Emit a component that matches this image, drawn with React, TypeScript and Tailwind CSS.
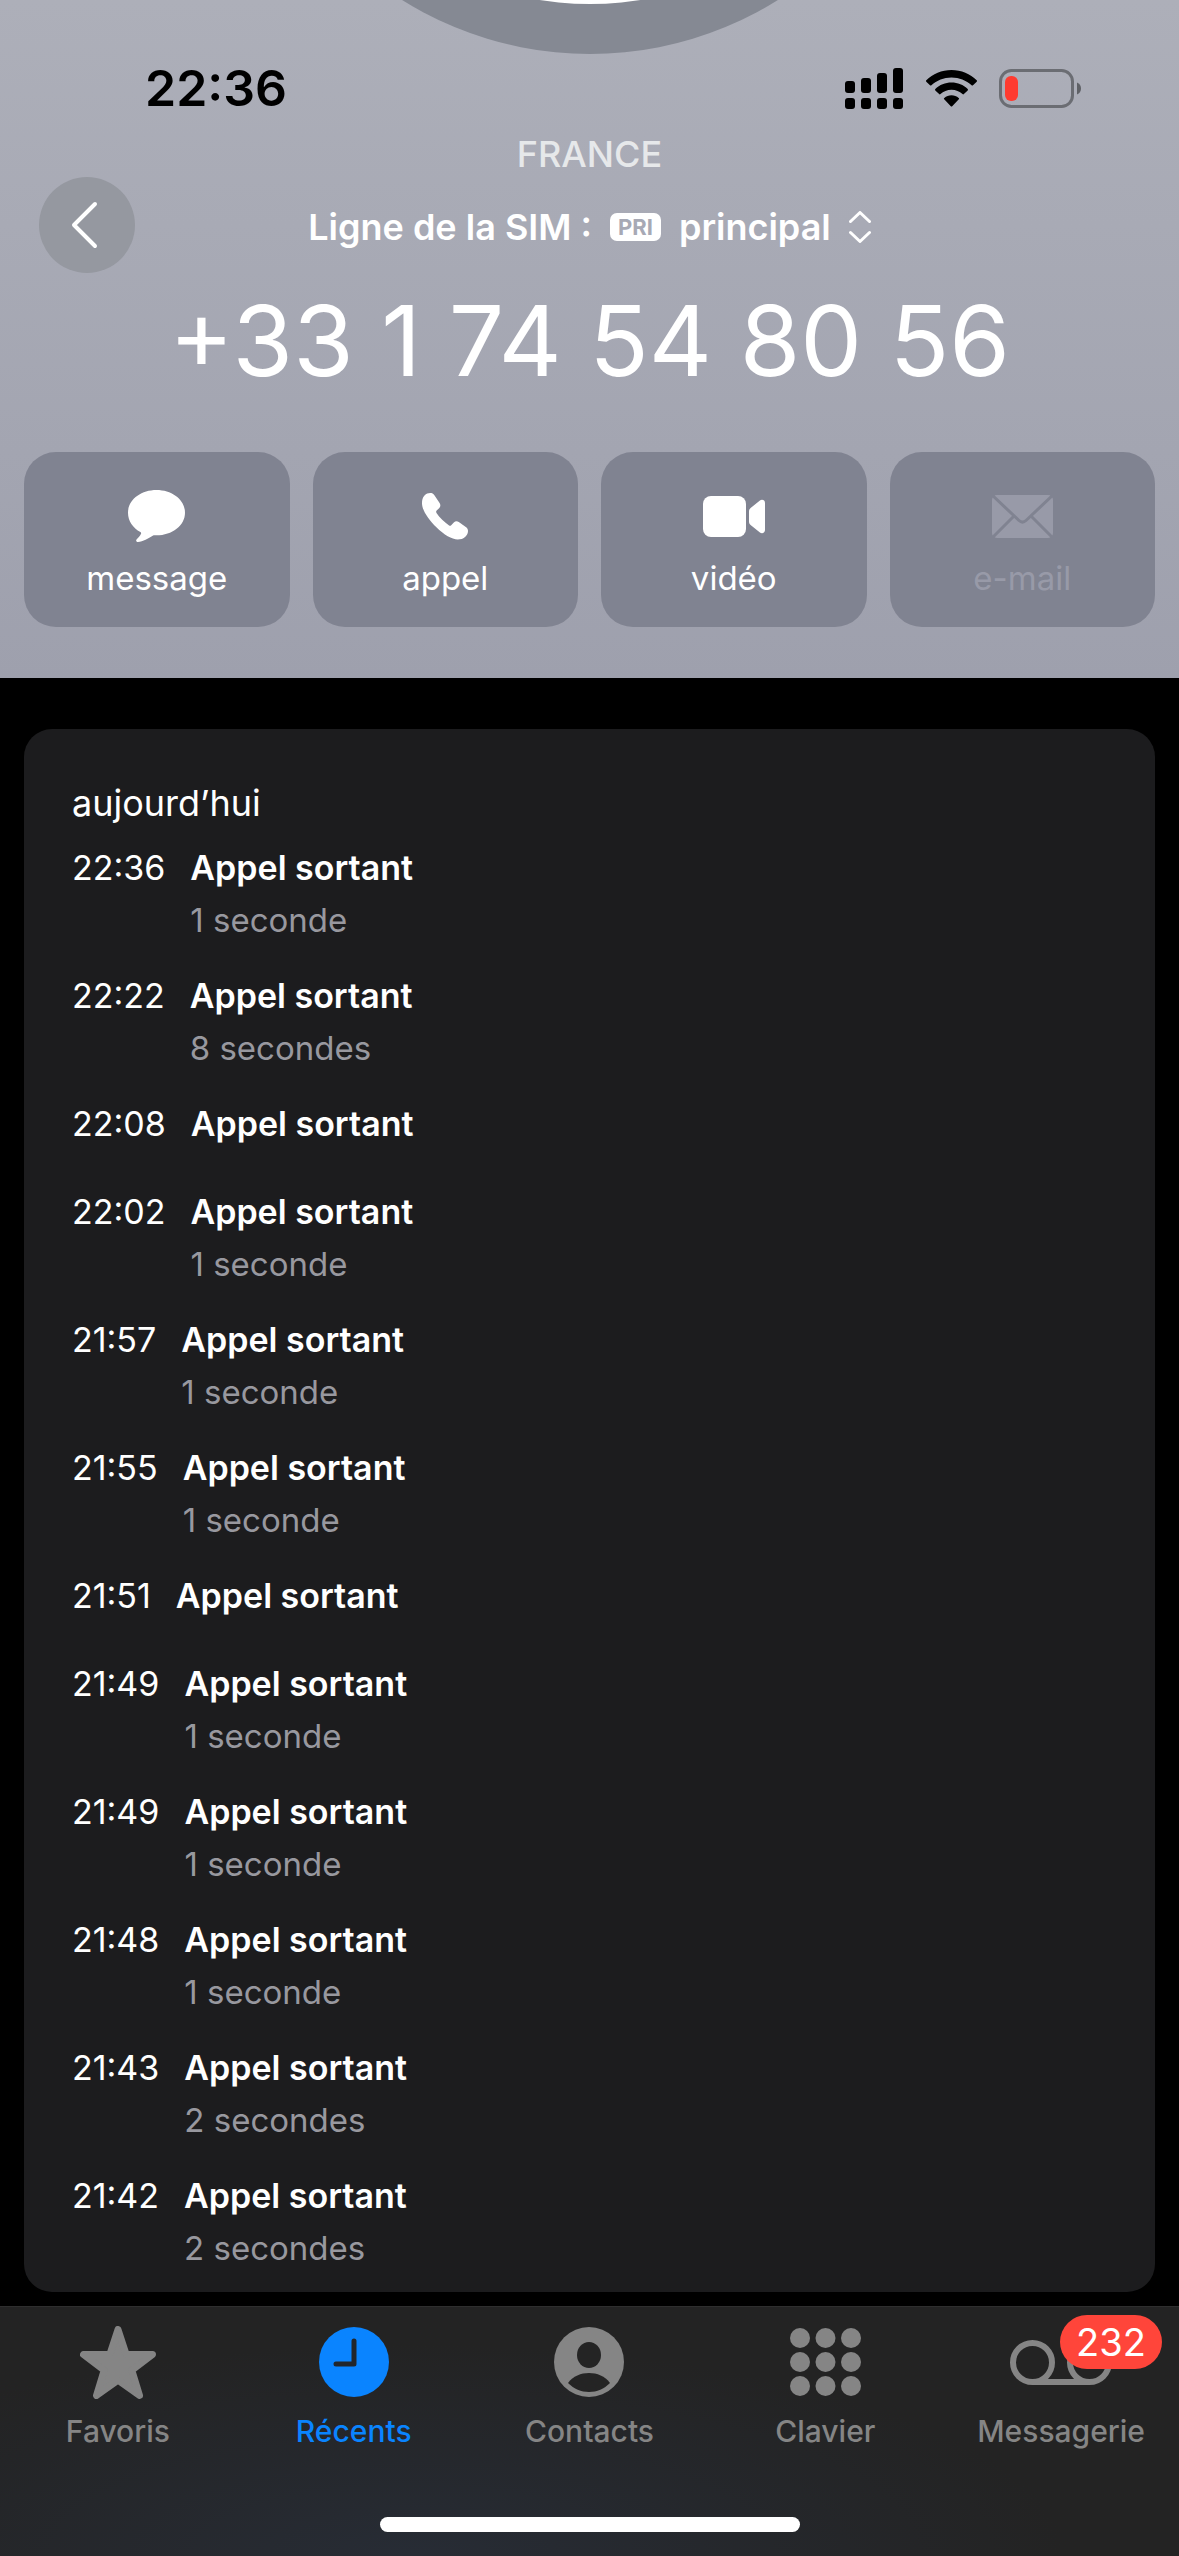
import React, { useState } from 'react';
import clsx from 'clsx';

interface CallEntry {
  time: string;
  label: string;
  duration?: string;
}

interface ActionProps {
  label: string;
  disabled?: boolean;
  children: React.ReactNode;
}

interface Tab {
  id: string;
  label: string;
  icon: React.ReactNode;
  badge?: number;
}

const calls: CallEntry[] = [
  { time: '22:36', label: 'Appel sortant', duration: '1 seconde' },
  { time: '22:22', label: 'Appel sortant', duration: '8 secondes' },
  { time: '22:08', label: 'Appel sortant' },
  { time: '22:02', label: 'Appel sortant', duration: '1 seconde' },
  { time: '21:57', label: 'Appel sortant', duration: '1 seconde' },
  { time: '21:55', label: 'Appel sortant', duration: '1 seconde' },
  { time: '21:51', label: 'Appel sortant' },
  { time: '21:49', label: 'Appel sortant', duration: '1 seconde' },
  { time: '21:49', label: 'Appel sortant', duration: '1 seconde' },
  { time: '21:48', label: 'Appel sortant', duration: '1 seconde' },
  { time: '21:43', label: 'Appel sortant', duration: '2 secondes' },
  { time: '21:42', label: 'Appel sortant', duration: '2 secondes' },
];

// ============================================================================
// ICONS
// ============================================================================

const SignalIcon = () => (
  <svg width="59" height="41" viewBox="0 0 59 41" fill="black" aria-hidden="true">
    <rect x="0" y="13" width="10" height="12" rx="3" />
    <rect x="16" y="10" width="10" height="15" rx="3" />
    <rect x="32" y="5" width="10" height="20" rx="3" />
    <rect x="48" y="0" width="10" height="25" rx="3" />
    <rect x="0" y="30" width="10" height="11" rx="3" />
    <rect x="16" y="30" width="10" height="11" rx="3" />
    <rect x="32" y="30" width="10" height="11" rx="3" />
    <rect x="48" y="30" width="10" height="11" rx="3" />
  </svg>
);

const WifiIcon = () => (
  <svg width="51" height="37" viewBox="0 0 51 37" fill="black" aria-hidden="true">
    <path d="M25.5 0C15.7 0 6.8 3.8.3 10.3c-.4.4-.4 1 0 1.4l3.7 3.6c.4.4 1 .4 1.4 0C10.8 10.2 17.8 7.4 25.5 7.4s14.7 2.8 20.1 7.9c.4.4 1 .4 1.4 0l3.7-3.6c.4-.4.4-1 0-1.4C44.2 3.8 35.3 0 25.5 0z" />
    <path d="M25.5 12.6c-6.2 0-11.9 2.4-16.2 6.4-.4.4-.4 1 0 1.4l3.8 3.7c.4.4 1 .4 1.4 0 2.9-2.7 6.7-4.3 11-4.3s8.1 1.6 11 4.3c.4.4 1 .4 1.4 0l3.8-3.7c.4-.4.4-1 0-1.4-4.3-4-10-6.4-16.2-6.4z" />
    <path d="M25.5 25.3c-2.700 0-5.200 1-7.200 2.600-.5.400-.5 1-.1 1.400l6.600 6.900c.4.400 1 .4 1.400 0l6.600-6.900c.4-.4.400-1-.1-1.400-2-1.600-4.500-2.600-7.200-2.600z" />
  </svg>
);

const BatteryIcon = () => (
  <svg width="82" height="39" viewBox="0 0 82 39" fill="none" aria-hidden="true">
    <rect x="1.5" y="1.5" width="72" height="36" rx="11" stroke="#6b6d73" strokeWidth="3" />
    <path d="M78 13.5c2.5 1 4 3.3 4 6s-1.5 5-4 6z" fill="#5f6166" />
    <rect x="6" y="7" width="13" height="25" rx="6" fill="#ff3b30" />
  </svg>
);

const ChevronLeftIcon = () => (
  <svg width="28" height="48" viewBox="0 0 28 48" fill="none" aria-hidden="true">
    <path
      d="M24 3L3 24l21 21"
      stroke="white"
      strokeWidth="4"
      strokeLinecap="round"
      strokeLinejoin="round"
    />
  </svg>
);

const UpDownIcon = () => (
  <svg width="22" height="32" viewBox="0 0 22 32" fill="none" aria-hidden="true">
    <path
      d="M1.5 10.5L11 1.5l9.5 9M1.5 21.500l9.500 9 9.500-9"
      stroke="white"
      strokeWidth="3"
      strokeLinecap="round"
      strokeLinejoin="round"
    />
  </svg>
);

const MessageIcon = () => (
  <svg width="57" height="52" viewBox="0 0 57 52" fill="currentColor" aria-hidden="true">
    <path d="M28.5 0C12.8 0 0 9.8 0 22.7c0 8.300 5 15.300 12.400 19.300.8.500.9 1.200.5 2-1 2-2.500 3.500-4.200 5.200-1.100 1.200-.5 2.800 1.200 2.800 5.200-.3 10.500-3.500 14.800-6.200.7-.4 1.200-.5 2-.5h1.800C44.200 45.300 57 35.500 57 22.700 57 9.800 44.200 0 28.500 0z" />
  </svg>
);

const PhoneIcon = () => (
  <svg width="46" height="47" viewBox="0 0 46 47" fill="currentColor" aria-hidden="true">
    <path d="M2.7 2.3C4.2.8 6 0 8.200 0c1.800 0 3.200.6 4.200 2.200L17.600 10c1.100 1.800 1 3.500-.3 5l-2.600 2.600c-.7.7-.7 1.500-.2 2.300 1.500 2.300 3.500 4.700 5.700 6.900s4.600 4.200 6.900 5.700c.7.500 1.500.4 2.100-.2l2.600-2.700c1.500-1.500 3.200-1.700 5-.5l7 5c1.500 1 2.200 2.300 2.200 4 0 2-.9 3.900-2.400 5.400-2.300 2.400-5 3-7.900 3-5.700 0-13.800-4.700-21.300-12.200C6.300 26.200 0 17.200 0 10.200c0-2.900.5-5.800 2.700-7.900z" />
  </svg>
);

const VideoIcon = () => (
  <svg width="62" height="41" viewBox="0 0 62 41" fill="currentColor" aria-hidden="true">
    <rect x="0" y="0" width="43" height="41" rx="8" />
    <path d="M46 15.500c0-1.500.5-2.500 1.600-3.500l9-7.300c2.300-1.900 5.400-.7 5.400 2.200v27.200c0 2.900-3.100 4.100-5.400 2.200l-9-7.300c-1.100-1-1.600-2-1.600-3.500z" />
  </svg>
);

const MailIcon = () => (
  <svg width="61" height="43" viewBox="0 0 61 43" fill="none" aria-hidden="true">
    <rect width="61" height="43" rx="5" fill="currentColor" />
    <path
      d="M0 0l27 25.500c2.200 2 4.800 2 7 0L61 0M0 43l22-22M61 43L39 21"
      stroke="#808391"
      strokeWidth="3"
    />
  </svg>
);

const StarIcon = () => (
  <svg width="76" height="73" viewBox="0 0 76 73" aria-hidden="true">
    <path
      d="M38 3.500L46.200 28.500h26.300L51.800 44.200 59.500 69.500 38 54.200 16.500 69.500l7.700-25.300L3.500 28.500h26.300z"
      fill="currentColor"
      stroke="currentColor"
      strokeWidth="7"
      strokeLinejoin="round"
    />
  </svg>
);

const ClockIcon = () => (
  <svg width="70" height="70" viewBox="0 0 70 70" fill="none" aria-hidden="true">
    <circle cx="35" cy="35" r="35" fill="currentColor" />
    <path
      d="M35 14v23H17"
      stroke="#22262b"
      strokeWidth="5"
      strokeLinecap="round"
      strokeLinejoin="round"
    />
  </svg>
);

const ContactIcon = () => (
  <svg width="70" height="70" viewBox="0 0 70 70" fill="none" aria-hidden="true">
    <circle cx="35" cy="35" r="35" fill="currentColor" />
    <ellipse cx="35" cy="28" rx="12" ry="13" fill="#242424" />
    <path d="M14 56c5-7 13-10 21-10s16 3 21 10c-6 6-13 9-21 9s-15-3-21-9z" fill="#242424" />
  </svg>
);

const KeypadIcon = () => (
  <svg width="71" height="68" viewBox="0 0 71 68" fill="currentColor" aria-hidden="true">
    {[10, 34, 58].map((y) =>
      [10, 35.5, 61].map((x) => <circle key={`${x}-${y}`} cx={x} cy={y} r="10" />)
    )}
  </svg>
);

const VoicemailIcon = () => (
  <svg
    width="102"
    height="45"
    viewBox="0 0 102 45"
    fill="none"
    stroke="currentColor"
    strokeWidth="6"
    aria-hidden="true"
  >
    <circle cx="22.5" cy="22.5" r="19.5" />
    <circle cx="79.5" cy="22.5" r="19.5" />
    <path d="M22.5 42h57" />
  </svg>
);

const tabs: Tab[] = [
  { id: 'favoris', label: 'Favoris', icon: <StarIcon /> },
  { id: 'recents', label: 'Récents', icon: <ClockIcon /> },
  { id: 'contacts', label: 'Contacts', icon: <ContactIcon /> },
  { id: 'clavier', label: 'Clavier', icon: <KeypadIcon /> },
  { id: 'messagerie', label: 'Messagerie', icon: <VoicemailIcon />, badge: 232 },
];

// ============================================================================
// SECTIONS
// ============================================================================

const StatusBar = () => (
  <div className="relative flex items-center justify-between pt-[58px] pr-[98px] pl-[145px]">
    <span className="text-[50px] leading-[60px] font-semibold text-black">22:36</span>
    <div className="flex items-center gap-[22px]">
      <SignalIcon />
      <WifiIcon />
      <BatteryIcon />
    </div>
  </div>
);

const ActionButton: React.FC<ActionProps> = ({ label, disabled = false, children }) => (
  <button
    type="button"
    disabled={disabled}
    className={clsx(
      'flex flex-col items-center gap-[14px] rounded-[32px] bg-[#808391] pt-[38px] pb-[27px]',
      disabled ? 'text-[#989aa8]' : 'text-white'
    )}
  >
    <span className="flex h-[52px] items-center">{children}</span>
    <span className="text-[33px] leading-[44px]">{label}</span>
  </button>
);

const ContactHeader = () => (
  <header className="relative overflow-hidden bg-linear-to-b from-[#adafb9] to-[#9ea0ad] pb-[51px]">
    {/* Avatar, scrolled almost out of view */}
    <div className="absolute bottom-full left-1/2 h-[708px] w-[708px] -translate-x-1/2 translate-y-[54px] rounded-full bg-[#858993]">
      <div className="absolute bottom-[50px] left-1/2 h-[640px] w-[640px] -translate-x-1/2 rounded-full bg-white" />
    </div>

    <StatusBar />

    <div className="mt-[14px] grid grid-cols-[96px_1fr_96px] items-end px-[39px]">
      <button
        type="button"
        aria-label="Retour"
        className="flex h-24 w-24 items-center justify-center rounded-full bg-[#9598a0] pr-1"
      >
        <ChevronLeftIcon />
      </button>
      <div className="flex flex-col items-center gap-[29px] pb-6">
        <p className="text-[36px] leading-[44px] font-medium text-[#e6e8ea]">FRANCE</p>
        <button
          type="button"
          className="flex items-center gap-[18px] text-[36px] leading-[44px] font-semibold whitespace-nowrap text-white"
        >
          <span>Ligne de la SIM :</span>
          <span className="rounded-[7px] bg-white px-2 text-[22px] leading-[28px] font-bold text-[#a7a9b5]">
            PRI
          </span>
          <span>principal</span>
          <UpDownIcon />
        </button>
      </div>
    </div>

    <h1 className="mt-2 text-center text-[98px] leading-[120px] whitespace-nowrap text-white">
      +33 1 74 54 80 56
    </h1>

    <div className="mt-[51px] grid grid-cols-4 gap-[23px] px-6">
      <ActionButton label="message">
        <MessageIcon />
      </ActionButton>
      <ActionButton label="appel">
        <PhoneIcon />
      </ActionButton>
      <ActionButton label="vidéo">
        <VideoIcon />
      </ActionButton>
      <ActionButton label="e-mail" disabled>
        <MailIcon />
      </ActionButton>
    </div>
  </header>
);

const CallHistory = () => (
  <section className="mx-6 mt-[51px] rounded-[28px] bg-[#1c1c1e] px-12 pt-12 pb-[18px]">
    <h2 className="text-[36px] leading-[52px]">aujourd’hui</h2>
    <ul className="mt-[13px] flex flex-col gap-6">
      {calls.map((call, index) => (
        <li key={index} className="flex min-h-16 gap-[25px] text-[34px] leading-[52px]">
          <time>{call.time}</time>
          <div>
            <p className="font-semibold">{call.label}</p>
            {call.duration && (
              <p className="text-[33px] leading-[52px] text-[#98989f]">{call.duration}</p>
            )}
          </div>
        </li>
      ))}
    </ul>
  </section>
);

const TabBar = () => {
  const [active, setActive] = useState('recents');

  return (
    <nav className="mt-[14px] border-t border-[#2e2e2e] bg-[#262626] bg-radial-[at_35%_100%] from-[#272c35] to-[#232323] to-60% pb-6">
      <div className="grid grid-cols-5">
        {tabs.map((tab) => (
          <button
            key={tab.id}
            type="button"
            onClick={() => setActive(tab.id)}
            className={clsx(
              'flex flex-col items-center gap-[10px] pt-4',
              active === tab.id ? 'text-[#0a84ff]' : 'text-[#858585]'
            )}
          >
            <span className="relative flex h-[78px] items-center">
              {tab.icon}
              {tab.badge && (
                <span className="absolute -top-2 left-[50px] rounded-full bg-[#ff453a] px-4 text-[38px] leading-[54px] text-white">
                  {tab.badge}
                </span>
              )}
            </span>
            <span className="text-[30px] leading-[40px] font-medium">{tab.label}</span>
          </button>
        ))}
      </div>
      <div className="mx-auto mt-[66px] h-[15px] w-[420px] rounded-full bg-white" />
    </nav>
  );
};

export default function App() {
  return (
    <main className="min-h-screen bg-black font-['Inter','Liberation_Sans',sans-serif] text-white">
      <ContactHeader />
      <CallHistory />
      <TabBar />
    </main>
  );
}
